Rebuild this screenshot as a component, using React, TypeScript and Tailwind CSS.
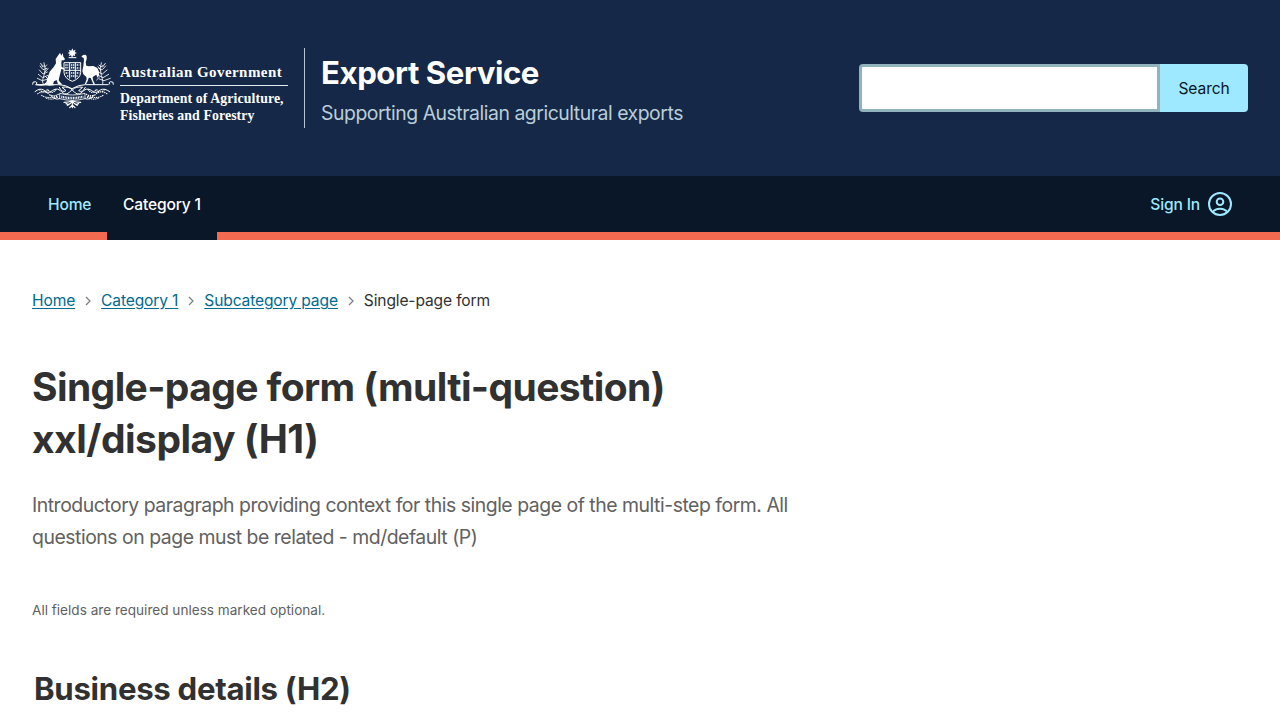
import React from "react";

function CoatOfArms() {
  return (
    <svg viewBox="24 24 246 183" className="h-[61px] w-[82px] shrink-0" fill="none" stroke="#fff" aria-hidden="true">
      <path fill="#fff" stroke="none" d="M145 25l3 7 7-3-3 7 7 3-7 3 2 7-6-3-4 7-3-7-7 3 3-7-6-3 6-3-2-7 7 3z" />
      <path strokeWidth="3" d="M134 53h23" />
      <path
        fill="#fff"
        stroke="none"
        d="M108 38l4 9 4-8 2 11 5 7-3 4-7 0-1 9 1 11 8 4 1 4-10-2-2 9-3 11-3 14 7 9 3 2-1 2-11-1-4-13-8 4-3 9 5 3-16 1-10-1-15 1-15-1 3-2 20-1 8-6 4-15 6-17 12-14 7-11-1-13z"
      />
      <path
        fill="#fff"
        stroke="none"
        d="M172 50l5-5 7-1 4 4 0 9-3 10 2 10 8 2 13-1 12 6 5 11 0 11-4 8-4-10-5 3-6 4 1 9 6 13-4 1-9-20-6-1-2 8-6 12-4 0 6-15-1-7-9-8-3-10 3-15 2-18-1-6z"
      />
      <path strokeWidth="3" d="M120 68h50v30q-2 18-25 26-23-8-25-26zM120 91h50M137 68v48M154 68v48" />
      <path strokeWidth="5" strokeDasharray="4 2" d="M124 75h9M141 75h10M158 75h8M124 83h9M141 83h10M158 84h8M125 99h8M141 99h10M158 99h8M129 108h6M141 108h10M157 108h5" />
      <path strokeWidth="3" d="M26 134q-2-10 8-9 8 2 3 8M34 134h70q20 0 40 12 20-12 40-12h70M268 134q2-10-8-9-8 2-3 8" />
      <path strokeWidth="2.5" strokeLinecap="round" d="M60 68q8 18 0 38t-2 26M56 76l6 5 6-6M48 78l9 11 12-4M46 90l11 12 13-6M43 103l13 10 16-7M40 115l15 7 17-5M72 86l-9 10M50 70l6 11M65 110l8 8" />
      <path strokeWidth="2.5" strokeLinecap="round" d="M232 68q-7 18 0 38t4 26M237 76l-6 5-6-6M245 78l-10 11-11-4M249 90l-14 12-13-6M254 103l-17 10-14-7M259 115l-19 7-14-5M222 80l8 10M244 70l-8 11M226 112l-8 8" />
      <path strokeWidth="3" strokeLinecap="round" d="M33 155q14-12 26-5 14 14 27 1 16-10 28 6 14 13 30-8 16 21 30 8 12-16 28-6 13 13 27-1 12-7 28 5" />
      <path strokeWidth="3.5" strokeDasharray="4 2.5" d="M40 162q20-14 36 2 17 8 30-4M250 162q-20-14-36 2-17 8-30-4M46 148q12 16 25 0 13 19 27-2M242 148q-12 16-25 0-13 19-27-2M52 166q18 12 50 2M238 166q-18 12-50 2M66 174q20 8 36-4M224 174q-20 8-36-4" />
      <path strokeWidth="2.5" d="M107 160q38 10 76 0v16q-38 10-76 0z" />
      <path strokeWidth="7" strokeDasharray="3 2" d="M112 170q33 8 66 0" />
      <path strokeWidth="3" strokeLinecap="round" d="M106 142q8 18 20 10l-12-10q20-4 31 8 11-12 31-8l-12 10q12 8 20-10M80 166q12 16 27 10M210 166q-12 16-27 10" />
      <path strokeWidth="3.5" strokeLinecap="round" d="M120 187q14 0 25-5 11 5 25 5M130 196q8-3 15-12 7 9 15 12M145 182v21M137 203l8-8 8 8M126 191l7 2M164 191l-7 2" />
    </svg>
  );
}

function Chevron() {
  return (
    <svg viewBox="0 0 10 12" className="h-3 w-[10px] shrink-0" fill="none" stroke="#808080" strokeWidth="1.3" aria-hidden="true">
      <path d="M3 2l4 4-4 4" />
    </svg>
  );
}

function AvatarIcon() {
  return (
    <svg viewBox="0 0 24 24" className="size-6" fill="none" stroke="currentColor" strokeWidth="2" aria-hidden="true">
      <circle cx="12" cy="12" r="11" />
      <circle cx="12" cy="9.7" r="3.3" />
      <path d="M5 20c1.5-2.4 4-3.2 7-3.2s5.500.8 7 3.200" />
    </svg>
  );
}

function Header() {
  return (
    <header className="flex h-44 items-start justify-between bg-[#162847] px-8 pt-12">
      <div className="flex h-20">
        <div className="flex w-[273px] border-r border-[#b5c5d6]">
          <CoatOfArms />
          <div className="ml-[6px] w-[168px] font-['Liberation_Serif',serif] font-bold text-white">
            <div className="mt-[15px] h-[23px] border-b border-[#e0ebf0] text-[15px] leading-[19px] tracking-[0.44px] whitespace-nowrap">
              Australian Government
            </div>
            <div className="mt-[4px] text-[13.800px] leading-[17px] tracking-[0.1px] whitespace-nowrap">
              Department of Agriculture,
              <br />
              Fisheries and Forestry
            </div>
          </div>
        </div>
        <div className="pl-4">
          <div className="mt-1 text-[31.2px] leading-[42px] font-bold tracking-[-0.45px] whitespace-nowrap text-white">Export Service</div>
          <div className="mt-1 text-[19.4px] leading-[30px] tracking-[-0.46px] whitespace-nowrap text-[#b9ced8]">
            Supporting Australian agricultural exports
          </div>
        </div>
      </div>
      <form className="mt-4 flex h-12">
        <input aria-label="Search" className="w-[301px] rounded-l-[4px] border-3 border-[#91b3bc] bg-white px-3 outline-none" />
        <button type="button" className="w-[88px] rounded-r-[4px] bg-[#9ee9ff] pt-[2px] text-[15.6px] tracking-[-0.1px] text-[#0a1728]">
          Search
        </button>
      </form>
    </header>
  );
}

function MainNav() {
  return (
    <nav className="flex h-16 bg-[#0a1728] text-[15.6px] leading-[26px] font-[450] tracking-[-0.17px] text-[#9ee9ff]">
      <div className="w-8 border-b-8 border-[#f26b50]" />
      <a className="w-[75px] border-b-8 border-[#f26b50] pt-4 pl-4 whitespace-nowrap">Home</a>
      <a className="w-[110px] pt-4 pl-4 whitespace-nowrap text-white">Category 1</a>
      <a className="flex flex-1 items-start justify-end gap-2 border-b-8 border-[#f26b50] pt-4 pr-12">
        <span>Sign In</span>
        <AvatarIcon />
      </a>
    </nav>
  );
}

function Breadcrumbs() {
  const link = "text-[#00698f] underline underline-offset-2 whitespace-nowrap";
  return (
    <div className="flex h-6 items-center gap-2 text-[15.6px] leading-[26px] tracking-[-0.15px] text-[#313131]">
      <a className={link}>Home</a>
      <Chevron />
      <a className={link}>Category 1</a>
      <Chevron />
      <a className={link}>Subcategory page</a>
      <Chevron />
      <span className="whitespace-nowrap">Single-page form</span>
    </div>
  );
}

export default function App() {
  return (
    <div className="h-[720px] overflow-hidden bg-white font-['Inter',sans-serif]">
      <Header />
      <MainNav />
      <main className="px-8 pt-[49px]">
        <Breadcrumbs />
        <h1 className="mt-12 text-[39px] leading-[52px] font-bold tracking-[-0.6px] text-[#313131]">
          <span className="block">Single-page form (multi-question)</span>
          <span className="block tracking-[-0.5px]">xxl/display (H1)</span>
        </h1>
        <p className="mt-6 text-[19.4px] leading-8 tracking-[-0.465px] text-[#616161]">
          <span className="block">Introductory paragraph providing context for this single page of the multi-step form. All</span>
          <span className="block">questions on page must be related - md/default (P)</span>
        </p>
        <p className="mt-[47px] text-[13.6px] leading-[21px] text-[#616161]">All fields are required unless marked optional.</p>
        <h2 className="mt-[47px] pl-[2px] text-[31.2px] leading-[42px] font-bold tracking-[-0.3px] text-[#313131]">Business details (H2)</h2>
      </main>
    </div>
  );
}
